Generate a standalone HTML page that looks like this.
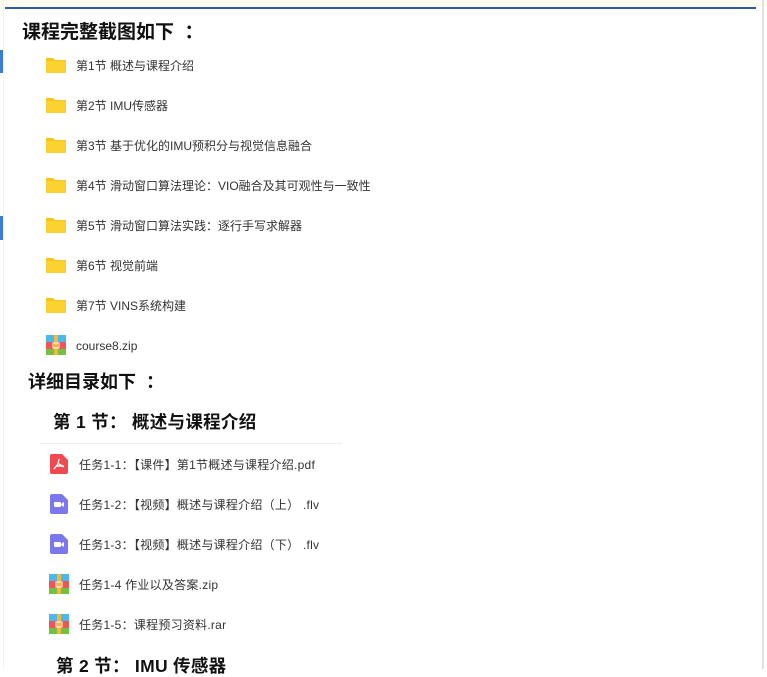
<!DOCTYPE html>
<html><head><meta charset="utf-8"><style>
body{margin:0;width:767px;height:669px;overflow:hidden;background:#fff;position:relative;font-family:"Liberation Sans","Noto Sans CJK SC",sans-serif;}
.a{position:absolute;white-space:nowrap;}
.t{font-size:12px;color:#333;line-height:16px;}
.u{letter-spacing:0.25px;}
.h{font-weight:bold;color:#111;}
.f{position:absolute;width:20px;height:17px;}
</style></head><body>
<div class="a" style="left:0;top:0;width:767px;height:7px;background:#fdfcf0"></div>
<div class="a" style="left:5px;top:7px;width:751px;height:1.5px;background:#2d5c9c"></div>
<div class="a" style="left:3px;top:0;width:1px;height:669px;background:#f2f2f2"></div>
<div class="a" style="left:762px;top:0;width:2px;height:669px;background:#e0e0e0"></div>
<div class="a" style="left:0;top:50px;width:3px;height:23px;background:#3a7bd5"></div>
<div class="a" style="left:0;top:216px;width:3px;height:24px;background:#3a7bd5"></div>
<div class="a h" style="left:22px;top:20px;font-size:19px;line-height:26px">课程完整截图如下&nbsp;&nbsp;：</div>

<svg width="0" height="0" style="position:absolute"><defs>
<g id="fd"><path d="M0 2h7l2 2h11v13H0z" fill="#f5c518"/><path d="M0 5h20v12H0z" fill="#fcd232"/></g>
<g id="zp"><rect x="0" y="0" width="20" height="7" fill="#4db8f0"/><rect x="0" y="7" width="20" height="7" fill="#ee5555"/><rect x="0" y="14" width="20" height="6" fill="#74c043"/><rect x="8" y="0" width="4" height="20" fill="#f5b93a"/><rect x="7" y="8" width="6" height="5" fill="none" stroke="#fff" stroke-width="1"/></g>
<g id="pdf"><path d="M0 2a2 2 0 0 1 2-2h10l6 6v12a2 2 0 0 1-2 2H2a2 2 0 0 1-2-2z" fill="#f0494f"/><path d="M9 5l-1 5-4 5M9 10l5 3M6 12h8" stroke="#fff" stroke-width="1.4" fill="none"/></g>
<g id="vd"><path d="M0 2a2 2 0 0 1 2-2h10l6 6v12a2 2 0 0 1-2 2H2a2 2 0 0 1-2-2z" fill="#7b78ee"/><rect x="4" y="8" width="7" height="5" rx="1" fill="#fff"/><path d="M11 10l3-2v5l-3-2z" fill="#fff"/></g>
</defs></svg>

<svg class="f" style="left:46px;top:56px"><use href="#fd"/></svg><div class="a t" style="left:76px;top:58px">第1节 概述与课程介绍</div>
<svg class="f" style="left:46px;top:96px"><use href="#fd"/></svg><div class="a t" style="left:76px;top:98px">第2节 IMU传感器</div>
<svg class="f" style="left:46px;top:136px"><use href="#fd"/></svg><div class="a t" style="left:76px;top:138px">第3节 基于优化的IMU预积分与视觉信息融合</div>
<svg class="f" style="left:46px;top:176px"><use href="#fd"/></svg><div class="a t" style="left:76px;top:178px">第4节 滑动窗口算法理论：VIO融合及其可观性与一致性</div>
<svg class="f" style="left:46px;top:216px"><use href="#fd"/></svg><div class="a t" style="left:76px;top:218px">第5节 滑动窗口算法实践：逐行手写求解器</div>
<svg class="f" style="left:46px;top:256px"><use href="#fd"/></svg><div class="a t" style="left:76px;top:258px">第6节 视觉前端</div>
<svg class="f" style="left:46px;top:296px"><use href="#fd"/></svg><div class="a t" style="left:76px;top:298px">第7节 VINS系统构建</div>
<svg class="f" style="left:46px;top:335px;height:20px"><use href="#zp"/></svg><div class="a t" style="left:76px;top:338px">course8.zip</div>

<div class="a h" style="left:28px;top:370px;font-size:18px;line-height:24px">详细目录如下&nbsp;&nbsp;：</div>
<div class="a h" style="left:53px;top:411px;font-size:17.5px;line-height:22px;letter-spacing:0.3px">第 1 节： 概述与课程介绍</div>
<div class="a" style="left:40px;top:443px;width:302px;height:1px;background:#eee"></div>

<svg class="f" style="left:50px;top:454px;height:20px"><use href="#pdf"/></svg><div class="a t u" style="left:79px;top:457px">任务1-1：【课件】第1节概述与课程介绍.pdf</div>
<svg class="f" style="left:50px;top:494px;height:20px"><use href="#vd"/></svg><div class="a t u" style="left:79px;top:497px">任务1-2：【视频】概述与课程介绍（上） .flv</div>
<svg class="f" style="left:50px;top:534px;height:20px"><use href="#vd"/></svg><div class="a t u" style="left:79px;top:537px">任务1-3：【视频】概述与课程介绍（下） .flv</div>
<svg class="f" style="left:49px;top:574px;height:20px"><use href="#zp"/></svg><div class="a t u" style="left:79px;top:577px">任务1-4 作业以及答案.zip</div>
<svg class="f" style="left:49px;top:614px;height:20px"><use href="#zp"/></svg><div class="a t u" style="left:79px;top:617px">任务1-5：课程预习资料.rar</div>

<div class="a h" style="left:56px;top:655px;font-size:17.5px;line-height:22px;letter-spacing:0.3px">第 2 节： IMU 传感器</div>
</body></html>
